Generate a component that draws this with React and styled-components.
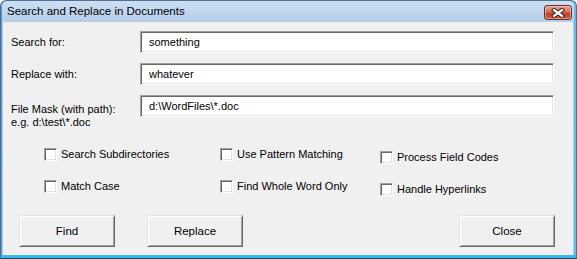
import styled, { createGlobalStyle } from "styled-components";

const GlobalStyle = createGlobalStyle`
  html, body {
    margin: 0;
    padding: 0;
    background: #ffffff;
  }
  body {
    font-family: "Liberation Sans", Arial, sans-serif;
    font-size: 11px;
    color: #000;
  }
`;

const Window = styled.div`
  box-sizing: border-box;
  width: 577px;
  height: 259px;
  display: flex;
  flex-direction: column;
  border: 1px solid #55708e;
  border-bottom-color: #23435e;
  border-radius: 6px 6px 0 0;
  background: linear-gradient(#cddff2 0, #b4cde9 22px, #a9d3ef 100%);
  box-shadow: inset 0 -3px 0 #39b8ea, inset -2px 0 0 #5cc0ec, inset 1px 0 0 #4f98d6;
`;

const TitleBar = styled.div`
  height: 21px;
  flex-shrink: 0;
  display: flex;
  align-items: flex-start;
  justify-content: space-between;
  padding: 0 4px 0 6px;
`;

const Title = styled.span`
  font-size: 11.5px;
  line-height: 21px;
  color: #000;
`;

const CloseButton = styled.button`
  box-sizing: border-box;
  width: 28px;
  height: 15px;
  margin-top: 4px;
  padding: 0;
  display: flex;
  align-items: center;
  justify-content: center;
  border: 1px solid #6e2a22;
  border-radius: 3px;
  background: linear-gradient(#e3a497 0, #d0725f 45%, #c1412f 55%, #cf5a3e 100%);
  box-shadow: inset 0 0 0 1px rgba(255, 210, 200, 0.55);
`;

const Client = styled.div`
  flex: 1;
  margin: 0 3px 3px 2px;
  background: #f0f0f0;
  display: flex;
  flex-direction: column;
  padding: 9px 18px 8px 8px;
`;

const Fields = styled.div`
  display: flex;
  flex-direction: column;
  gap: 10px;
  padding-right: 1px;
`;

const FieldRow = styled.div`
  display: grid;
  grid-template-columns: 129px 1fr;
  align-items: ${(p) => (p.$top ? "start" : "center")};
`;

const FieldLabel = styled.label`
  line-height: 13px;
  padding-top: ${(p) => p.$offset || 0}px;
`;

const TextBox = styled.input`
  box-sizing: border-box;
  height: 22px;
  width: 100%;
  margin: 0;
  padding: 0 0 0 8px;
  font-family: "Liberation Sans", Arial, sans-serif;
  font-size: 11px;
  color: #000;
  background: #fff;
  border-style: solid;
  border-width: 1px;
  border-color: #a0a0a0 #ffffff #ffffff #a0a0a0;
  box-shadow: inset 1px 1px 0 #696969, inset -1px -1px 0 #e3e3e3;
  outline: none;
`;

const Checks = styled.div`
  display: grid;
  grid-template-columns: 176px 160px auto;
  margin: 19px 0 0 33px;
`;

const CheckColumn = styled.div`
  display: flex;
  flex-direction: column;
  gap: 19px;
  padding-top: ${(p) => p.$shift || 0}px;
`;

const CheckItem = styled.label`
  display: flex;
  align-items: center;
  gap: 4px;
  height: 13px;
  line-height: 13px;
  white-space: nowrap;
`;

const Box = styled.span`
  box-sizing: border-box;
  width: 13px;
  height: 13px;
  flex-shrink: 0;
  background: #fff;
  border-style: solid;
  border-width: 1px;
  border-color: #a0a0a0 #ffffff #ffffff #a0a0a0;
  box-shadow: inset 1px 1px 0 #696969, inset -1px -1px 0 #e3e3e3;
`;

const Buttons = styled.div`
  display: flex;
  gap: 32px;
  margin: 19px 0 0 8px;
`;

const Button = styled.button`
  box-sizing: border-box;
  width: 96px;
  height: 32px;
  margin: 0;
  margin-left: ${(p) => (p.$push ? "auto" : "0")};
  padding: 0;
  font-family: "Liberation Sans", Arial, sans-serif;
  font-size: 11.5px;
  color: #000;
  background: #f0f0f0;
  border-style: solid;
  border-width: 1px;
  border-color: #e3e3e3 #696969 #696969 #e3e3e3;
  box-shadow: inset 1px 1px 0 #ffffff, inset -1px -1px 0 #a0a0a0;
`;

const CloseGlyph = () => (
  <svg width="14" height="10" viewBox="0 0 14 10">
    <path d="M3 2 L11 8 M11 2 L3 8" stroke="#4a1a14" strokeWidth="4.2" strokeLinecap="square" />
    <path d="M3 2 L11 8 M11 2 L3 8" stroke="#ffffff" strokeWidth="2.2" strokeLinecap="square" />
  </svg>
);

const Check = ({ children }) => (
  <CheckItem>
    <Box />
    {children}
  </CheckItem>
);

export default function App() {
  return (
    <>
      <GlobalStyle />
      <Window>
        <TitleBar>
          <Title>Search and Replace in Documents</Title>
          <CloseButton aria-label="Close">
            <CloseGlyph />
          </CloseButton>
        </TitleBar>
        <Client>
          <Fields>
            <FieldRow>
              <FieldLabel>Search for:</FieldLabel>
              <TextBox defaultValue="something" />
            </FieldRow>
            <FieldRow>
              <FieldLabel>Replace with:</FieldLabel>
              <TextBox defaultValue="whatever" />
            </FieldRow>
            <FieldRow $top>
              <FieldLabel $offset={8}>
                File Mask (with path):
                <br />
                e.g. d:\test\*.doc
              </FieldLabel>
              <TextBox defaultValue="d:\WordFiles\*.doc" />
            </FieldRow>
          </Fields>
          <Checks>
            <CheckColumn>
              <Check>Search Subdirectories</Check>
              <Check>Match Case</Check>
            </CheckColumn>
            <CheckColumn>
              <Check>Use Pattern Matching</Check>
              <Check>Find Whole Word Only</Check>
            </CheckColumn>
            <CheckColumn $shift={3}>
              <Check>Process Field Codes</Check>
              <Check>Handle Hyperlinks</Check>
            </CheckColumn>
          </Checks>
          <Buttons>
            <Button>Find</Button>
            <Button>Replace</Button>
            <Button $push>Close</Button>
          </Buttons>
        </Client>
      </Window>
    </>
  );
}
